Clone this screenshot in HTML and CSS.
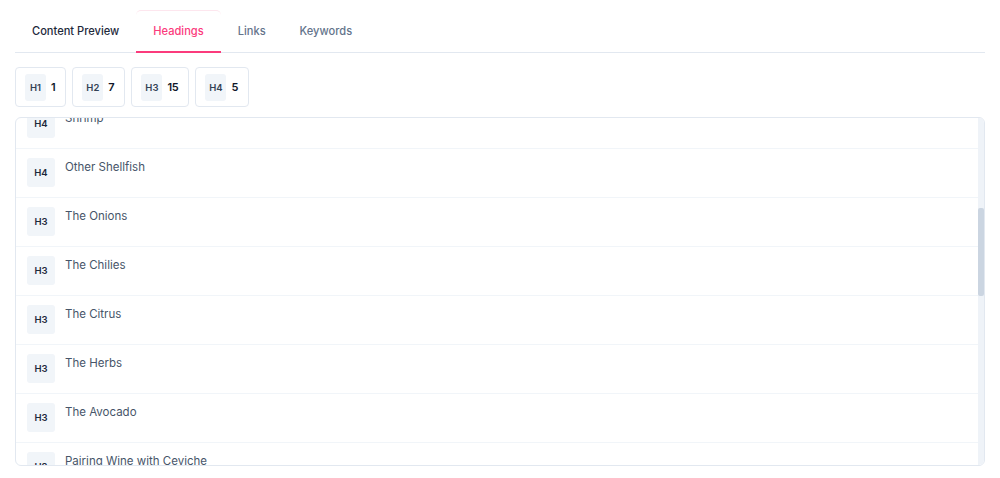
FILE: index.html
```html
<!DOCTYPE html>
<html lang="en">
<head>
<meta charset="utf-8">
<title>Headings</title>
<link rel="stylesheet" href="styles.css">
</head>
<body>
<div class="page">
  <nav class="tabs">
    <div class="tab tab-dark">Content Preview</div>
    <div class="tab tab-active">Headings</div>
    <div class="tab">Links</div>
    <div class="tab">Keywords</div>
  </nav>

  <div class="chips">
    <div class="chip"><span class="chip-tag">H1</span><span class="chip-num">1</span></div>
    <div class="chip"><span class="chip-tag">H2</span><span class="chip-num">7</span></div>
    <div class="chip"><span class="chip-tag">H3</span><span class="chip-num">15</span></div>
    <div class="chip"><span class="chip-tag">H4</span><span class="chip-num">5</span></div>
  </div>

  <div class="list-wrap">
    <div class="list" id="list">
      <div class="row"><span class="tag">H1</span><span class="text">The Complete Guide to Ceviche</span></div>
      <div class="row"><span class="tag">H2</span><span class="text">What Is Ceviche?</span></div>
      <div class="row"><span class="tag">H2</span><span class="text">Choosing Your Seafood</span></div>
      <div class="row"><span class="tag">H3</span><span class="text">The Fish</span></div>
      <div class="row"><span class="tag">H4</span><span class="text">White Fish</span></div>
      <div class="row"><span class="tag">H4</span><span class="text">Salmon and Tuna</span></div>
      <div class="row"><span class="tag">H3</span><span class="text">The Shellfish</span></div>
      <div class="row"><span class="tag">H4</span><span class="text">Shrimp</span></div>
      <div class="row"><span class="tag">H4</span><span class="text">Other Shellfish</span></div>
      <div class="row"><span class="tag">H3</span><span class="text">The Onions</span></div>
      <div class="row"><span class="tag">H3</span><span class="text">The Chilies</span></div>
      <div class="row"><span class="tag">H3</span><span class="text">The Citrus</span></div>
      <div class="row"><span class="tag">H3</span><span class="text">The Herbs</span></div>
      <div class="row"><span class="tag">H3</span><span class="text">The Avocado</span></div>
      <div class="row"><span class="tag">H2</span><span class="text">Pairing Wine with Ceviche</span></div>
      <div class="row"><span class="tag">H3</span><span class="text">Sauvignon Blanc</span></div>
      <div class="row"><span class="tag">H3</span><span class="text">Albariño</span></div>
      <div class="row"><span class="tag">H3</span><span class="text">Pisco Sour</span></div>
      <div class="row"><span class="tag">H2</span><span class="text">Regional Variations</span></div>
      <div class="row"><span class="tag">H3</span><span class="text">Peruvian Ceviche</span></div>
      <div class="row"><span class="tag">H3</span><span class="text">Mexican Ceviche</span></div>
      <div class="row"><span class="tag">H3</span><span class="text">Ecuadorian Ceviche</span></div>
      <div class="row"><span class="tag">H2</span><span class="text">Food Safety Tips</span></div>
      <div class="row"><span class="tag">H3</span><span class="text">Freshness</span></div>
      <div class="row"><span class="tag">H3</span><span class="text">Marinating Time</span></div>
      <div class="row"><span class="tag">H2</span><span class="text">Serving Suggestions</span></div>
      <div class="row"><span class="tag">H2</span><span class="text">Frequently Asked Questions</span></div>
      <div class="row"><span class="tag">H4</span><span class="text">How Long Does Ceviche Last?</span></div>
    </div>
    <div class="scrollbar"><div class="thumb"></div></div>
  </div>
</div>
<script src="script.js"></script>
</body>
</html>
```

FILE: styles.css
```css
* { box-sizing: border-box; }
html, body { margin: 0; padding: 0; background: #ffffff; }
body {
  font-family: Inter, "Noto Sans", "Liberation Sans", sans-serif;
  color: #1e293b;
}
.page { padding: 0 15px; }

.tabs {
  display: flex;
  padding-top: 10px;
  border-bottom: 1px solid #e2e8f0;
}
.tab {
  padding: 10px 17px 10px;
  font-size: 11.1px;
  line-height: 20px;
  font-weight: 500;
  color: #64748b;
  border-top: 1px solid transparent;
  border-bottom: 2px solid transparent;
  margin-bottom: -1px;
  border-radius: 5px 5px 0 0;
}
.tab-dark { color: #1e293b; }
.tab-active {
  color: #fb3b7c;
  border-top-color: #fde6ee;
  border-bottom-color: #fb3b7c;
}

.chips {
  display: flex;
  gap: 6px;
  margin-top: 14px;
}
.chip {
  display: flex;
  align-items: center;
  gap: 5px;
  height: 40px;
  padding: 0 10px 0 9px;
  border: 1px solid #e2e8f0;
  border-radius: 4px;
}
.chip-tag {
  display: flex;
  align-items: center;
  justify-content: center;
  min-width: 21px;
  height: 27px;
  padding: 0 3px;
  background: #f1f5f9;
  border-radius: 3px;
  font-size: 9.5px;
  font-weight: 600;
  color: #334155;
}
.chip-num {
  font-size: 11px;
  font-weight: 600;
  color: #0f172a;
  letter-spacing: -0.3px;
}

.list-wrap {
  position: relative;
  margin-top: 10px;
}
.list {
  height: 349px;
  border: 1px solid #e2e8f0;
  border-radius: 6px;
  overflow: hidden;
}
.scrollbar {
  position: absolute;
  top: 1px;
  bottom: 1px;
  right: 1px;
  width: 6px;
  background: #eff3f8;
  border-radius: 0 5px 5px 0;
}
.thumb {
  margin-top: 90px;
  height: 88px;
  background: #cbd5e1;
  border-radius: 2px;
}

.row {
  display: flex;
  align-items: flex-start;
  gap: 10px;
  height: 49px;
  padding: 9px 11px 0;
  border-bottom: 1px solid #f1f5f9;
}
.tag {
  flex: none;
  display: flex;
  align-items: center;
  justify-content: center;
  width: 28px;
  height: 29px;
  background: #f1f5f9;
  border-radius: 3px;
  font-size: 9.5px;
  font-weight: 600;
  color: #1e293b;
}
.text {
  font-size: 11.5px;
  line-height: 18px;
  color: #475569;
}
```

FILE: script.js
```js
document.getElementById('list').scrollTop = 361;
```
